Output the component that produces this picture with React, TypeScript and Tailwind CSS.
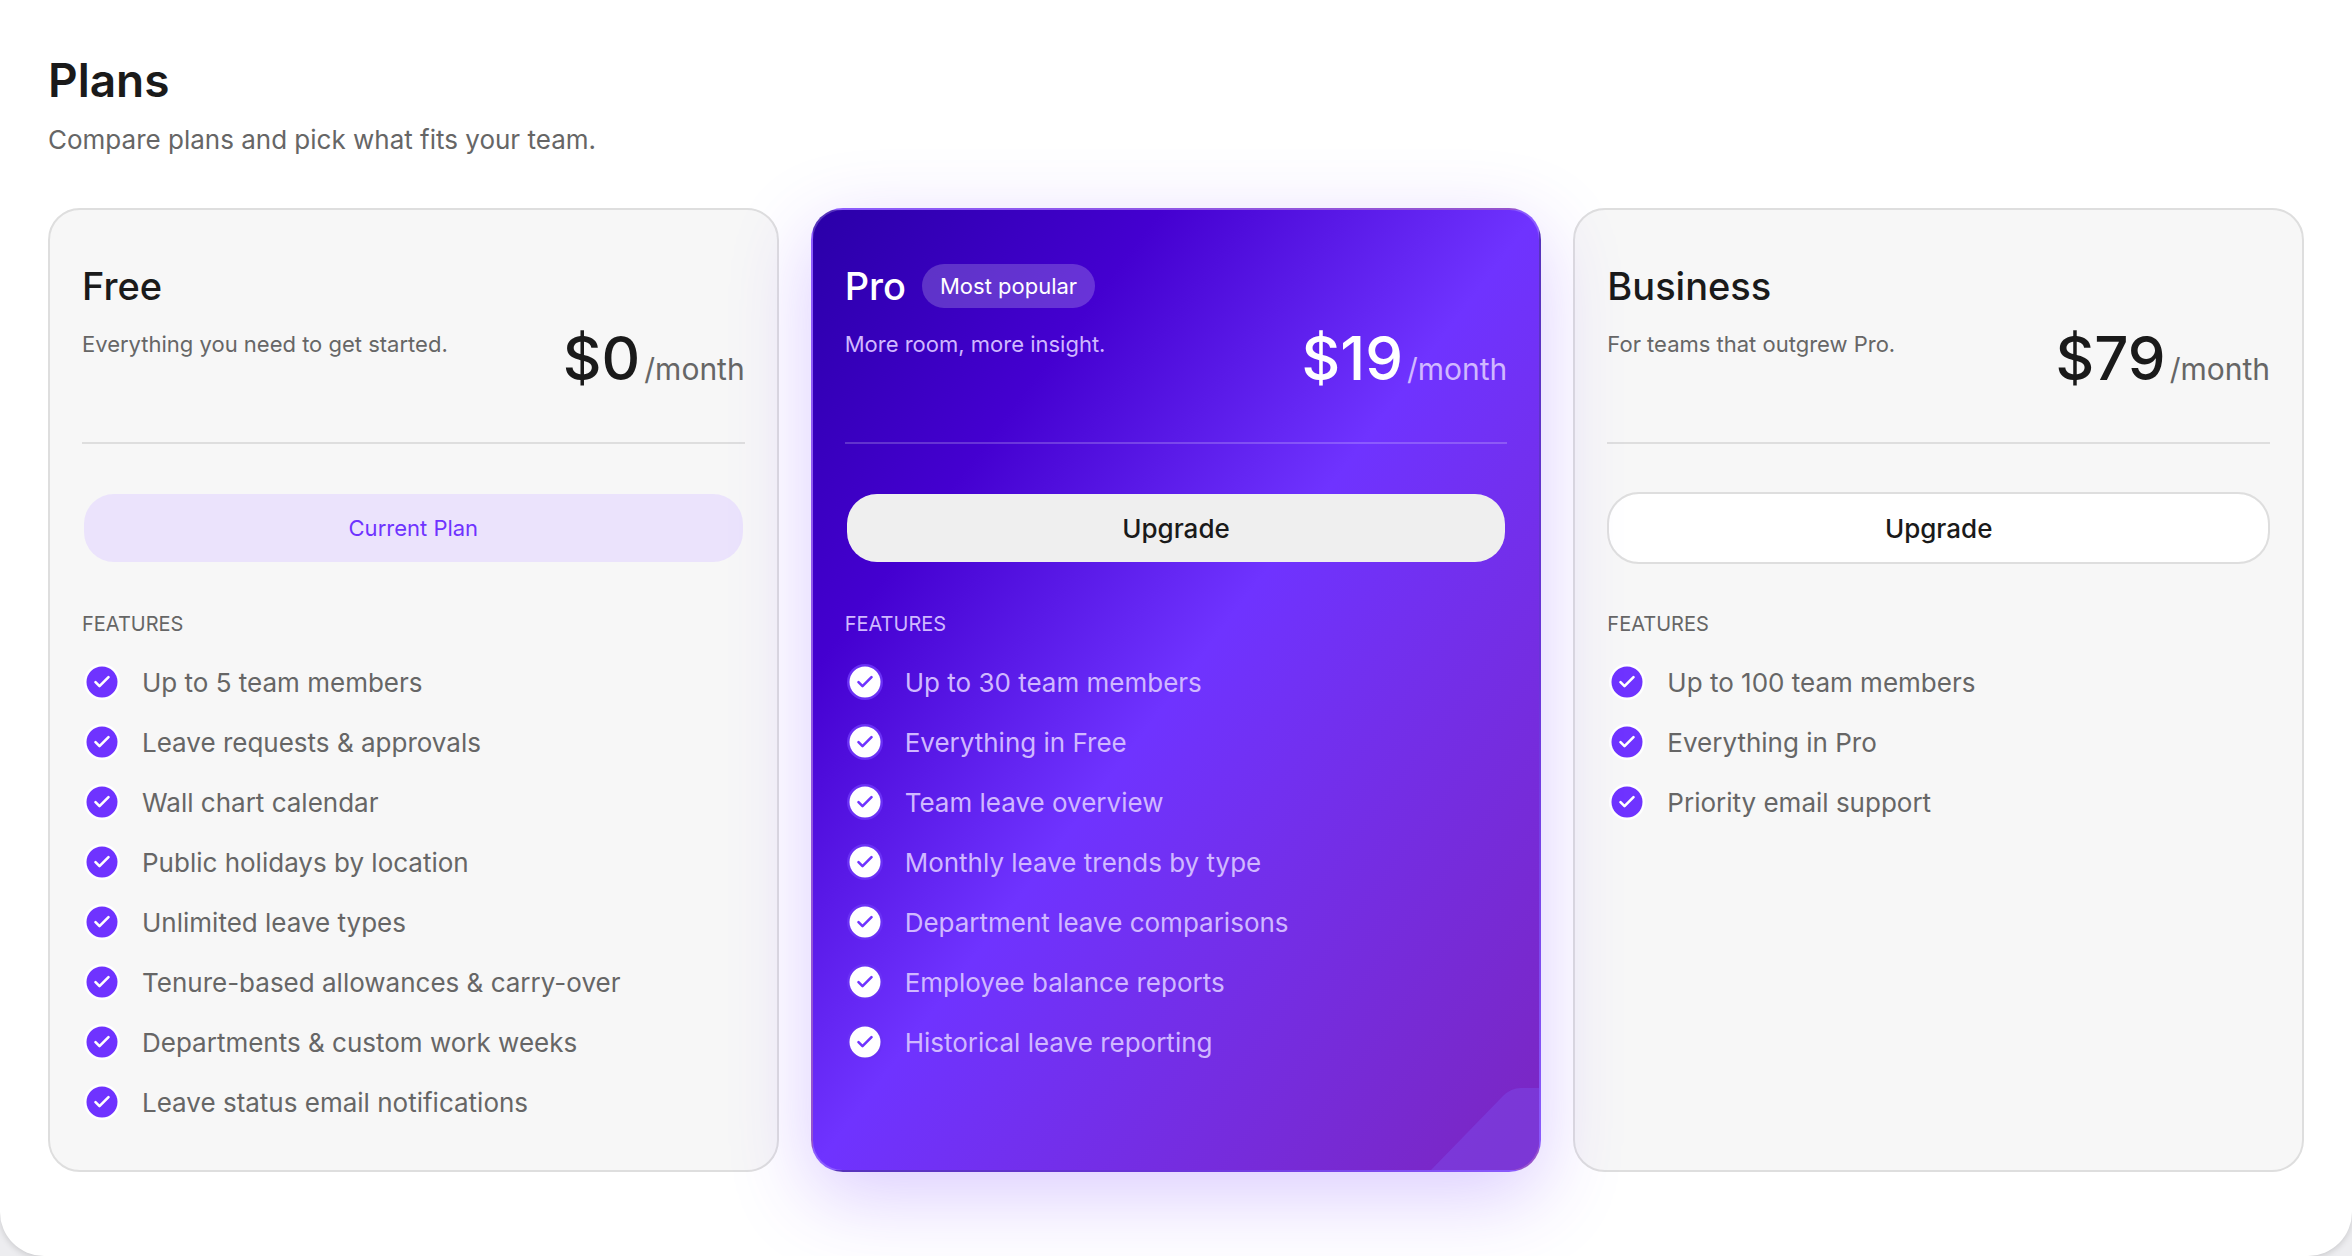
type Plan = {
  name: string;
  blurb: string;
  price: string;
  action: string;
  badge?: string;
  kind: "current" | "featured" | "standard";
  features: string[];
};

const plans: Plan[] = [
  {
    name: "Free",
    blurb: "Everything you need to get started.",
    price: "$0",
    action: "Current Plan",
    kind: "current",
    features: [
      "Up to 5 team members",
      "Leave requests & approvals",
      "Wall chart calendar",
      "Public holidays by location",
      "Unlimited leave types",
      "Tenure-based allowances & carry-over",
      "Departments & custom work weeks",
      "Leave status email notifications",
    ],
  },
  {
    name: "Pro",
    blurb: "More room, more insight.",
    price: "$19",
    action: "Upgrade",
    badge: "Most popular",
    kind: "featured",
    features: [
      "Up to 30 team members",
      "Everything in Free",
      "Team leave overview",
      "Monthly leave trends by type",
      "Department leave comparisons",
      "Employee balance reports",
      "Historical leave reporting",
    ],
  },
  {
    name: "Business",
    blurb: "For teams that outgrew Pro.",
    price: "$79",
    action: "Upgrade",
    kind: "standard",
    features: ["Up to 100 team members", "Everything in Pro", "Priority email support"],
  },
];

function CheckBadge({ featured }: { featured: boolean }) {
  return (
    <svg viewBox="0 0 36 36" className="size-9 shrink-0" aria-hidden="true">
      <circle cx="18" cy="18" r="18" fill={featured ? "#6a30f5" : "#ffffff"} />
      <circle cx="18" cy="18" r="15.5" fill={featured ? "#ffffff" : "#6f33ff"} />
      <path
        d="M11.5 18.2l4 4 9-9"
        fill="none"
        stroke={featured ? "#6f33ff" : "#ffffff"}
        strokeWidth="2.6"
        strokeLinecap="round"
        strokeLinejoin="round"
      />
    </svg>
  );
}

function PlanCard({ plan }: { plan: Plan }) {
  const featured = plan.kind === "featured";
  const card = featured
    ? "relative z-10 border-white/20 bg-[linear-gradient(to_bottom_right,#2a00a8,#4400d0_24%,#6f33ff_50%,#7b26c0)] shadow-[0_24px_80px_rgba(111,51,255,0.25)]"
    : "border-[#dedede] bg-[#f7f7f7]";
  const strong = featured ? "text-white" : "text-[#1a1a1a]";
  const muted = featured ? "text-[#d0b8ff]" : "text-[#666666]";
  const button =
    plan.kind === "current"
      ? "border-transparent bg-[#ebe3fc] text-[22px] text-[#6f33ff]"
      : featured
        ? "border-transparent bg-[#efefef] text-[26px] font-medium text-[#1a1a1a]"
        : "border-[#dedede] bg-white text-[26px] font-medium text-[#1a1a1a]";

  return (
    <article className={`flex flex-col rounded-[32px] border-2 px-8 pt-12 pb-[38px] ${card}`}>
      <header className={`border-b-2 pb-[50px] ${featured ? "border-white/20" : "border-[#dedede]"}`}>
        <div className="flex h-14 items-center gap-4">
          <h2 className={`text-[38px] font-medium ${strong}`}>{plan.name}</h2>
          {plan.badge && (
            <span className="rounded-full bg-white/20 px-[18px] text-[22px] leading-11 text-white">{plan.badge}</span>
          )}
        </div>
        <div className="mt-3 flex items-start justify-between gap-4">
          <p className={`text-[22px] leading-9 ${muted}`}>{plan.blurb}</p>
          <p className="flex items-baseline gap-1">
            <span className={`text-[60px] leading-16 font-medium ${strong}`}>{plan.price}</span>
            <span className={`text-[30px] ${muted}`}>/month</span>
          </p>
        </div>
      </header>
      <button
        type="button"
        disabled={plan.kind === "current"}
        className={`mt-12 h-18 w-full rounded-[32px] border-2 bg-clip-padding ${button}`}
      >
        {plan.action}
      </button>
      <h3 className={`mt-11 text-[20px] leading-8 ${muted}`}>FEATURES</h3>
      <ul className="mt-3">
        {plan.features.map((feature) => (
          <li key={feature} className={`flex h-15 items-center gap-[22px] pl-0.5 text-[26px] ${muted}`}>
            <CheckBadge featured={featured} />
            {feature}
          </li>
        ))}
      </ul>
      {featured && (
        <svg
          viewBox="0 0 108 82"
          className="pointer-events-none absolute right-0 bottom-0 w-27 rounded-br-[30px]"
          aria-hidden="true"
        >
          <path d="M0 82L72 8Q80 0 90 0H108V82Z" fill="#7d40e0" fillOpacity="0.65" />
        </svg>
      )}
    </article>
  );
}

export default function App() {
  return (
    <div className="min-h-screen bg-[#ededf0] font-[Inter,sans-serif]">
      <main className="min-h-screen rounded-b-[44px] bg-white px-12 pt-12 pb-[84px] shadow-[0_2px_6px_rgba(0,0,0,0.15)]">
        <h1 className="text-[46px] leading-16 font-semibold text-[#1a1a1a]">Plans</h1>
        <p className="mt-2 text-[26px] leading-10 text-[#666666]">Compare plans and pick what fits your team.</p>
        <section className="mt-12 grid grid-cols-3 gap-8">
          {plans.map((plan) => (
            <PlanCard key={plan.name} plan={plan} />
          ))}
        </section>
      </main>
    </div>
  );
}
